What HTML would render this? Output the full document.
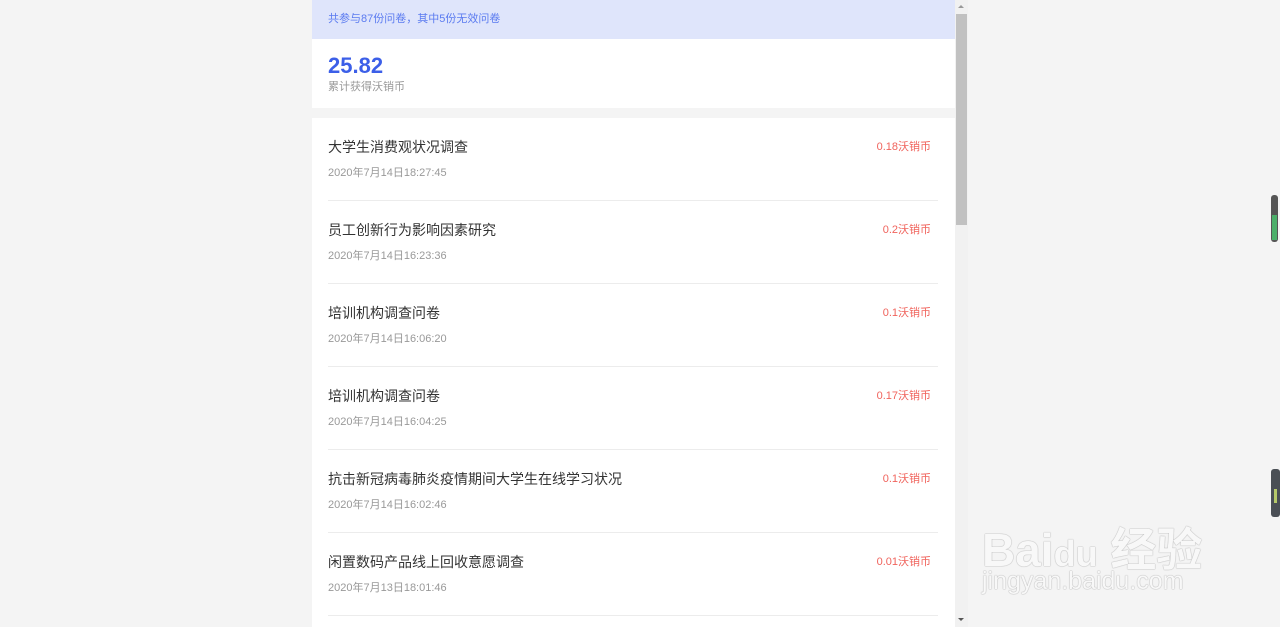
<!DOCTYPE html>
<html><head><meta charset="utf-8"><style>
html,body{margin:0;padding:0;width:1280px;height:627px;overflow:hidden;background:#f4f4f4;font-family:"Liberation Sans","Noto Sans CJK SC",sans-serif;}
.col{position:absolute;left:312px;top:0;width:643px;height:627px;background:#fff;}
.banner{height:39px;background:#dfe5fb;color:#5b7bf0;font-size:11px;line-height:38px;padding-left:16px;}
.sum{height:69px;padding-left:16px;}
.num{font-size:22px;font-weight:bold;color:#3c5fe8;padding-top:15px;line-height:24px;}
.lbl{font-size:11px;color:#999;line-height:16px;margin-top:1px;}
.gap{height:10px;background:#f4f4f4;}
.item{position:relative;height:82px;margin:0 17px 0 16px;border-bottom:1px solid #ececec;}
.t{position:absolute;left:0;top:20px;font-size:14px;color:#333;line-height:18px;}
.d{position:absolute;left:0;top:47px;font-size:11px;color:#999;line-height:16px;}
.a{position:absolute;right:7px;top:21px;font-size:11px;color:#f0635c;line-height:16px;}
.sb{position:absolute;left:955px;top:0;width:13px;height:627px;background:#f1f1f1;}
.thumb{position:absolute;left:1px;top:14px;width:11px;height:211px;background:#c1c1c1;}
.wm{position:absolute;left:982px;top:514px;color:#f8f8f8;font-size:46px;font-weight:bold;letter-spacing:0px;text-shadow:0 0 1px #aaa,0 0 1px #aaa;white-space:nowrap;}
.wm2{position:absolute;left:982px;top:567px;color:#f8f8f8;font-size:25px;text-shadow:0 0 1px #aaa,0 0 1px #aaa;}
</style></head><body>
<div class="col">
<div class="banner">共参与87份问卷，其中5份无效问卷</div>
<div class="sum"><div class="num">25.82</div><div class="lbl">累计获得沃销币</div></div>
<div class="gap"></div>
<div class="item"><div class="t">大学生消费观状况调查</div><div class="d">2020年7月14日18:27:45</div><div class="a">0.18沃销币</div></div>
<div class="item"><div class="t">员工创新行为影响因素研究</div><div class="d">2020年7月14日16:23:36</div><div class="a">0.2沃销币</div></div>
<div class="item"><div class="t">培训机构调查问卷</div><div class="d">2020年7月14日16:06:20</div><div class="a">0.1沃销币</div></div>
<div class="item"><div class="t">培训机构调查问卷</div><div class="d">2020年7月14日16:04:25</div><div class="a">0.17沃销币</div></div>
<div class="item"><div class="t">抗击新冠病毒肺炎疫情期间大学生在线学习状况</div><div class="d">2020年7月14日16:02:46</div><div class="a">0.1沃销币</div></div>
<div class="item"><div class="t">闲置数码产品线上回收意愿调查</div><div class="d">2020年7月13日18:01:46</div><div class="a">0.01沃销币</div></div>
</div>
<div class="sb"><div class="thumb"></div>
<div style="position:absolute;left:3px;top:5px;border:3px solid transparent;border-bottom:3px solid #999;border-top:0"></div>
<div style="position:absolute;left:3px;top:618px;border:3px solid transparent;border-top:3px solid #555;border-bottom:0"></div></div>
<div style="position:absolute;left:1271px;top:195px;width:7px;height:47px;border-radius:3px;background:#555;"><div style="position:absolute;left:1px;top:20px;width:5px;height:25px;background:#4caf6a;"></div></div>
<div style="position:absolute;left:1271px;top:469px;width:9px;height:48px;border-radius:3px;background:#4a4f55;"><div style="position:absolute;left:3px;top:20px;width:3px;height:14px;background:#b6c96a;"></div></div>
<div class="wm">Bai<span style="font-size:36px">du</span> 经验</div>
<div class="wm2">jingyan.baidu.com</div>
</body></html>
